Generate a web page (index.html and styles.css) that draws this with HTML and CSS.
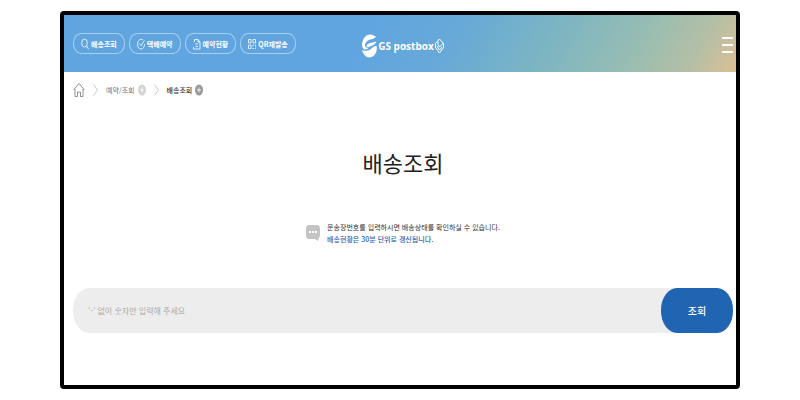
FILE: index.html
```html
<!DOCTYPE html>
<html lang="ko">
<head>
    <meta charset="utf-8">
    <title>배송조회 - GS postbox</title>
    <link rel="stylesheet" href="styles.css">
</head>
<body>
    <div class="page">
        <header class="header">
            <nav class="quick-menu">
                <a href="#">
                    <svg width="8" height="12" viewBox="0 0 8 12"><ellipse cx="3.5" cy="5" rx="2.8" ry="4"/><path d="M5.5 8l2 3"/></svg>
                    배송조회
                </a>
                <a href="#">
                    <svg width="8" height="12" viewBox="0 0 8 12"><path d="M6.2 2C3.6.2.6 2.500.6 6s1.400 5 3.400 5 3.500-2 3.500-5M2.500 5.500l1.500 2L7.500 2.500"/></svg>
                    택배예약
                </a>
                <a href="#">
                    <svg width="8" height="12" viewBox="0 0 8 12"><path d="M1.500 4V1.500h3.500L7 4v7H.5V9M5 1.500V4h2M2.500 6h2.500M2.500 8.500h2.500"/></svg>
                    예약현황
                </a>
                <a href="#">
                    <svg width="8" height="12" viewBox="0 0 8 12"><path d="M.5 1.500h2.500v3.500H.5zM5 1.500h2.500v3.500H5zM.5 7h2.500v3.500H.5zM5 6.500v2M7.500 6.500v2M4.500 10.500H6M7.500 9.500v1.500"/></svg>
                    QR재발송
                </a>
            </nav>
            <a class="logo" href="#">
                <svg width="15" height="24" viewBox="0 0 15 24">
                    <path class="fill" d="M14 3C11-.5 5-.5 2 4-.5 8-.5 13 1.500 15 3 16 5 15.500 6.500 14 3 14 2 11 4 8.500 6.500 5 10 6 14 3z"/>
                    <path class="fill" d="M4.500 12C5 9 9 9 14.500 7.500 13 11 10 11.500 8 12.500c-1.500 1-3 1-3.500-.5z"/>
                    <path class="fill" d="M0 16c5 2 8 0 10-2 1.500-1.500 3-2 4.500-2C16 18 12 23.500 7.500 23.500 4 23.500 1 20 0 16z"/>
                </svg>
                <span>GS postbox</span>
                <svg width="9" height="16" viewBox="0 0 9 16"><path d="M4.500 1l4 4.500v4l-4 5.500-4-5.500v-4zM3 3.500v3l1.500 2.500 4-4M2 8l2.500 4L7 9"/></svg>
            </a>
            <button class="menu-button" type="button" aria-label="메뉴">
                <span></span><span></span><span></span>
            </button>
        </header>

        <nav class="breadcrumb">
            <a href="#" aria-label="홈">
                <svg width="12" height="16" viewBox="0 0 12 16"><path d="M.5 8L6 1.500 11.500 8M2 7v7.500h2.500V10h3v4.500H10V7"/></svg>
            </a>
            <svg class="arrow" width="5" height="12" viewBox="0 0 5 12"><path d="M.5.5l4 5.500-4 5.500"/></svg>
            <a class="crumb" href="#">
                예약/조회
                <svg class="plus" width="8" height="12" viewBox="0 0 8 12"><ellipse cx="4" cy="6" rx="4" ry="5.500"/><path d="M2 6h4M4 3.500v5"/></svg>
            </a>
            <svg class="arrow" width="5" height="12" viewBox="0 0 5 12"><path d="M.5.5l4 5.500-4 5.500"/></svg>
            <a class="crumb current" href="#">
                배송조회
                <svg class="plus" width="8" height="12" viewBox="0 0 8 12"><ellipse cx="4" cy="6" rx="4" ry="5.500"/><path d="M2 6h4M4 3.500v5"/></svg>
            </a>
        </nav>

        <main>
            <h1>배송조회</h1>
            <div class="notice">
                <svg width="14" height="18" viewBox="0 0 14 18">
                    <path class="bubble" d="M3 1h8q3 0 3 4v6q0 3-1.500 3.500L12 17l-3-2H3q-3 0-3-4V5q0-4 3-4z"/>
                    <path class="dots" d="M3 7h2v2H3zM6 7h2v2H6zM9 7h2v2H9z"/>
                </svg>
                <p>
                    운송장번호를 입력하시면 배송상태를 확인하실 수 있습니다.<br>
                    <strong>배송현황은 30분 단위로 갱신됩니다.</strong>
                </p>
            </div>
            <form class="search">
                <input type="text" aria-label="운송장번호" placeholder="‘-’ 없이 숫자만 입력해 주세요">
                <button type="button">조회</button>
            </form>
        </main>
    </div>
</body>
</html>
```
FILE: styles.css
```css
* {
    box-sizing: border-box;
}
body {
    margin: 0;
    padding: 11px 60px;
    background: #fff;
    color: #333;
    font-family: "Noto Sans CJK KR", sans-serif;
}
a {
    color: inherit;
    text-decoration: none;
}
svg {
    flex: none;
    fill: none;
    stroke: currentColor;
}
.page {
    min-height: calc(100vh - 22px);
    border: 4px solid #000;
    border-radius: 4px;
}

/* header */
.header {
    display: grid;
    grid-template-columns: 1fr auto 1fr;
    align-items: center;
    height: 57px;
    padding: 0 3px 0 9px;
    color: #fff;
    background: linear-gradient(120deg, #60a5df 0%, #60a5df 45%, #67a9d8 57%, #7ab4c4 70%, #98bdb2 84%, #b5bfa6 93%, #dcbf94 100%);
}
.quick-menu {
    display: flex;
    gap: 4px;
}
.quick-menu a {
    display: flex;
    align-items: center;
    gap: 2px;
    height: 21px;
    padding: 0 7px;
    border: 1px solid #a9d0f1;
    border-radius: 8px / 10px;
    font-size: 7px;
    font-weight: 700;
    white-space: nowrap;
}
.quick-menu svg {
    stroke-width: 0.8;
}
.logo {
    display: flex;
    align-items: center;
    gap: 1px;
    padding-top: 4px;
    font-family: "Open Sans", sans-serif;
    font-size: 10px;
    font-weight: 700;
}
.logo .fill {
    fill: #fff;
    stroke: none;
}
.menu-button {
    display: flex;
    flex-direction: column;
    gap: 5px;
    justify-self: end;
    padding: 3px 0 0;
    border: 0;
    background: none;
}
.menu-button span {
    width: 11px;
    height: 2px;
    background: #fff;
}

/* breadcrumb */
.breadcrumb {
    display: flex;
    align-items: center;
    gap: 8px;
    height: 36px;
    padding-left: 9px;
    color: #777;
    font-size: 7px;
}
.breadcrumb a {
    display: flex;
    align-items: center;
    gap: 3px;
}
.breadcrumb svg {
    stroke-width: 0.8;
}
.breadcrumb .arrow {
    color: #bbb;
}
.breadcrumb .plus {
    fill: #d4d4d4;
    stroke: none;
}
.breadcrumb .plus path {
    stroke: #fff;
}
.breadcrumb .current {
    color: #333;
    font-weight: 500;
}
.breadcrumb .current .plus {
    fill: #999;
}

/* content */
main {
    padding: 30px 3px 0 9px;
}
h1 {
    margin: 0;
    color: #222;
    font-size: 22px;
    font-weight: 400;
    line-height: 48px;
    text-align: center;
}
.notice {
    display: flex;
    justify-content: center;
    align-items: center;
    gap: 7px;
    margin: 35px 0 43px;
}
.notice svg {
    stroke: none;
}
.notice .bubble {
    fill: #c4c4c4;
}
.notice .dots {
    fill: #fff;
}
.notice p {
    margin: 0;
    font-size: 7px;
    line-height: 12px;
}
.notice strong {
    color: #1f65b2;
    font-weight: 500;
}
.search {
    display: flex;
    height: 45px;
    border-radius: 16px / 22px;
    background: #ededed;
}
.search input {
    flex: 1;
    min-width: 0;
    padding: 0 15px;
    border: 0;
    outline: 0;
    background: none;
    font-family: inherit;
    font-size: 8px;
}
.search input::placeholder {
    color: #aaa;
}
.search button {
    width: 72px;
    border: 0;
    border-radius: 16px / 22px;
    background: #1f65b2;
    color: #fff;
    font-family: inherit;
    font-size: 10px;
    font-weight: 500;
}
```
